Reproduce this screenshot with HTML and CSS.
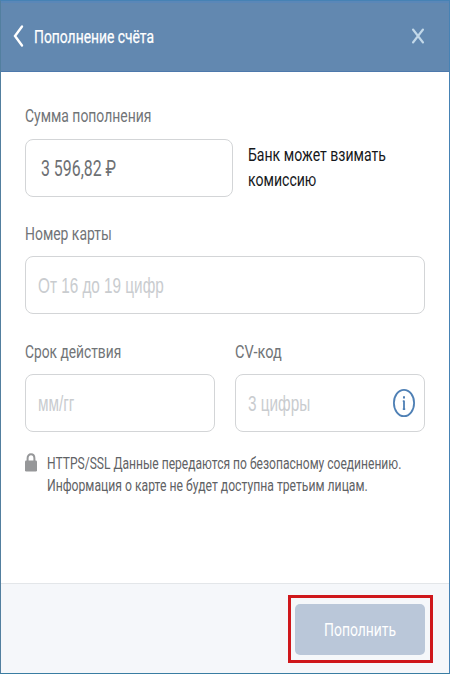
FILE: index.html
```html
<!DOCTYPE html>
<html lang="ru">
<head>
<meta charset="utf-8">
<title>Пополнение счёта</title>
<link rel="stylesheet" href="styles.css">
</head>
<body>
<div class="dialog">
  <header class="header">
    <svg class="back" width="12" height="24" viewBox="0 0 12 24"><path d="M10 2.5 3 12l7 9.5"/></svg>
    <h1 class="t title">Пополнение счёта</h1>
    <svg class="close" width="14" height="18" viewBox="0 0 14 18"><path d="M2 2.5l10 13M12 2.5l-10 13"/></svg>
  </header>
  <main class="content">
    <label class="label first"><span class="t">Сумма пополнения</span></label>
    <div class="row amount-row">
      <div class="field amount"><span class="t value">3 596,82 ₽</span></div>
      <div class="hint"><span class="t">Банк может взимать</span><span class="t">комиссию</span></div>
    </div>
    <label class="label"><span class="t">Номер карты</span></label>
    <div class="field card"><span class="t ph">От 16 до 19 цифр</span></div>
    <div class="row pair">
      <div class="half">
        <label class="label"><span class="t l-date">Срок действия</span></label>
        <div class="field"><span class="t ph">мм/гг</span></div>
      </div>
      <div class="half">
        <label class="label"><span class="t l-cv">CV-код</span></label>
        <div class="field"><span class="t ph">3 цифры</span>
          <svg class="info" width="24" height="30" viewBox="0 0 24 30"><ellipse cx="12" cy="15" rx="10.1" ry="13.2"/><path d="M12 12.6v9.2M10.8 13.2h1.2M10.8 21.2h2.4"/><path class="dot" d="M11 8.2h2v2.4h-2z"/></svg>
        </div>
      </div>
    </div>
    <div class="row secure">
      <svg class="lock" width="12" height="19" viewBox="0 0 12 19"><path class="shackle" d="M2.6 9V5.2C2.6 2.8 4 1.2 6 1.2s3.4 1.6 3.4 4V9"/><rect y="7.6" width="12" height="11" rx="1.3"/></svg>
      <div class="note"><span class="t s1">HTTPS/SSL Данные передаются по безопасному соединению.</span><span class="t s2">Информация о карте не будет доступна третьим лицам.</span></div>
    </div>
  </main>
  <footer class="footer">
    <div class="highlight"><button class="submit"><span class="t">Пополнить</span></button></div>
  </footer>
</div>
</body>
</html>
```
FILE: styles.css
```css
* { box-sizing: border-box; }
body { margin: 0; font-family: Roboto, "Liberation Sans", sans-serif; }
.dialog {
  width: 450px; height: 674px; background: #fff;
  border: 1px solid #4682b4; border-left-color: #527f9f; border-bottom-color: #397da2;
  display: flex; flex-direction: column; overflow: hidden;
}
/* Condensed lettering: each label sets its own horizontal scale */
.t { display: block; width: max-content; white-space: nowrap; transform-origin: 0 50%; transform: scaleX(var(--sx, .733)); }
.header {
  height: 71px; flex: none; background: #6288b0; border-top: 2px solid #5a87b8; border-bottom: 1px solid #4d79ac;
  display: flex; align-items: center; padding: 0 24px 2px 11px;
}
svg { fill: none; flex: none; display: block; }
.back { stroke: #fff; stroke-width: 2.4; stroke-linecap: round; }
.title { margin: 1px 0 0 10px; font-size: 19px; line-height: 24px; font-weight: 400; color: #fff; --sx: .73; -webkit-text-stroke: .25px #fff; }
.close { margin-left: auto; stroke: #c2d8e9; stroke-width: 2.1; stroke-linecap: round; }
.content { flex: 1; padding: 32px 24px 0; }
.label { display: block; height: 35px; font-size: 19px; line-height: 26px; color: #717477; }
.first { line-height: 24px; }
.row { display: flex; }
.field {
  height: 58px; border: 1px solid #d3d5d7; border-radius: 8px; background: #fff;
  display: flex; align-items: center; padding: 0 8px 0 12px;
}
.amount-row { margin-bottom: 24px; }
.amount { width: 208px; flex: none; padding-left: 15px; }
.value { margin-top: 2px; font-size: 22px; line-height: 26px; color: #6d7073; --sx: .722; }
.hint { margin-left: 15px; padding-top: 3px; width: 150px; font-size: 19px; line-height: 25px; color: #16181b; --sx: .74; }
.ph { margin-top: 2px; font-family: "Liberation Sans", Arial, sans-serif; font-size: 22px; line-height: 26px; color: #c9cccf; --sx: .695; }
.card { margin-bottom: 25px; }
.pair { gap: 20px; }
.half { width: 190px; }
.l-date { --sx: .725; }
.l-cv { --sx: .765; }
.info { margin-left: auto; stroke: #4f80b5; stroke-width: 1.8; }
.info .dot { fill: #4f80b5; stroke: none; }
.secure { margin-top: 20px; gap: 10px; font-size: 17px; line-height: 22px; color: #5f6265; }
.s1 { --sx: .709; }
.s2 { --sx: .717; }
.lock { margin-top: 1px; fill: #969799; }
.lock .shackle { fill: none; stroke: #969799; stroke-width: 2; }
.footer {
  height: 90px; flex: none; background: #f5f7fa; border-top: 1px solid #e3e6e9;
  padding: 11px 16px 0 0; display: flex; justify-content: flex-end;
}
.highlight { width: 145px; height: 68px; border: 3px solid #cf171b; padding: 6px 5px 5px 4px; display: flex; }
.submit {
  flex: 1; border: 0; border-radius: 5px; background: #bac7d9; color: #fff;
  font-family: inherit; font-size: 19px; line-height: 24px; padding: 1px 0 0 29px; display: flex; align-items: center;
}
```
